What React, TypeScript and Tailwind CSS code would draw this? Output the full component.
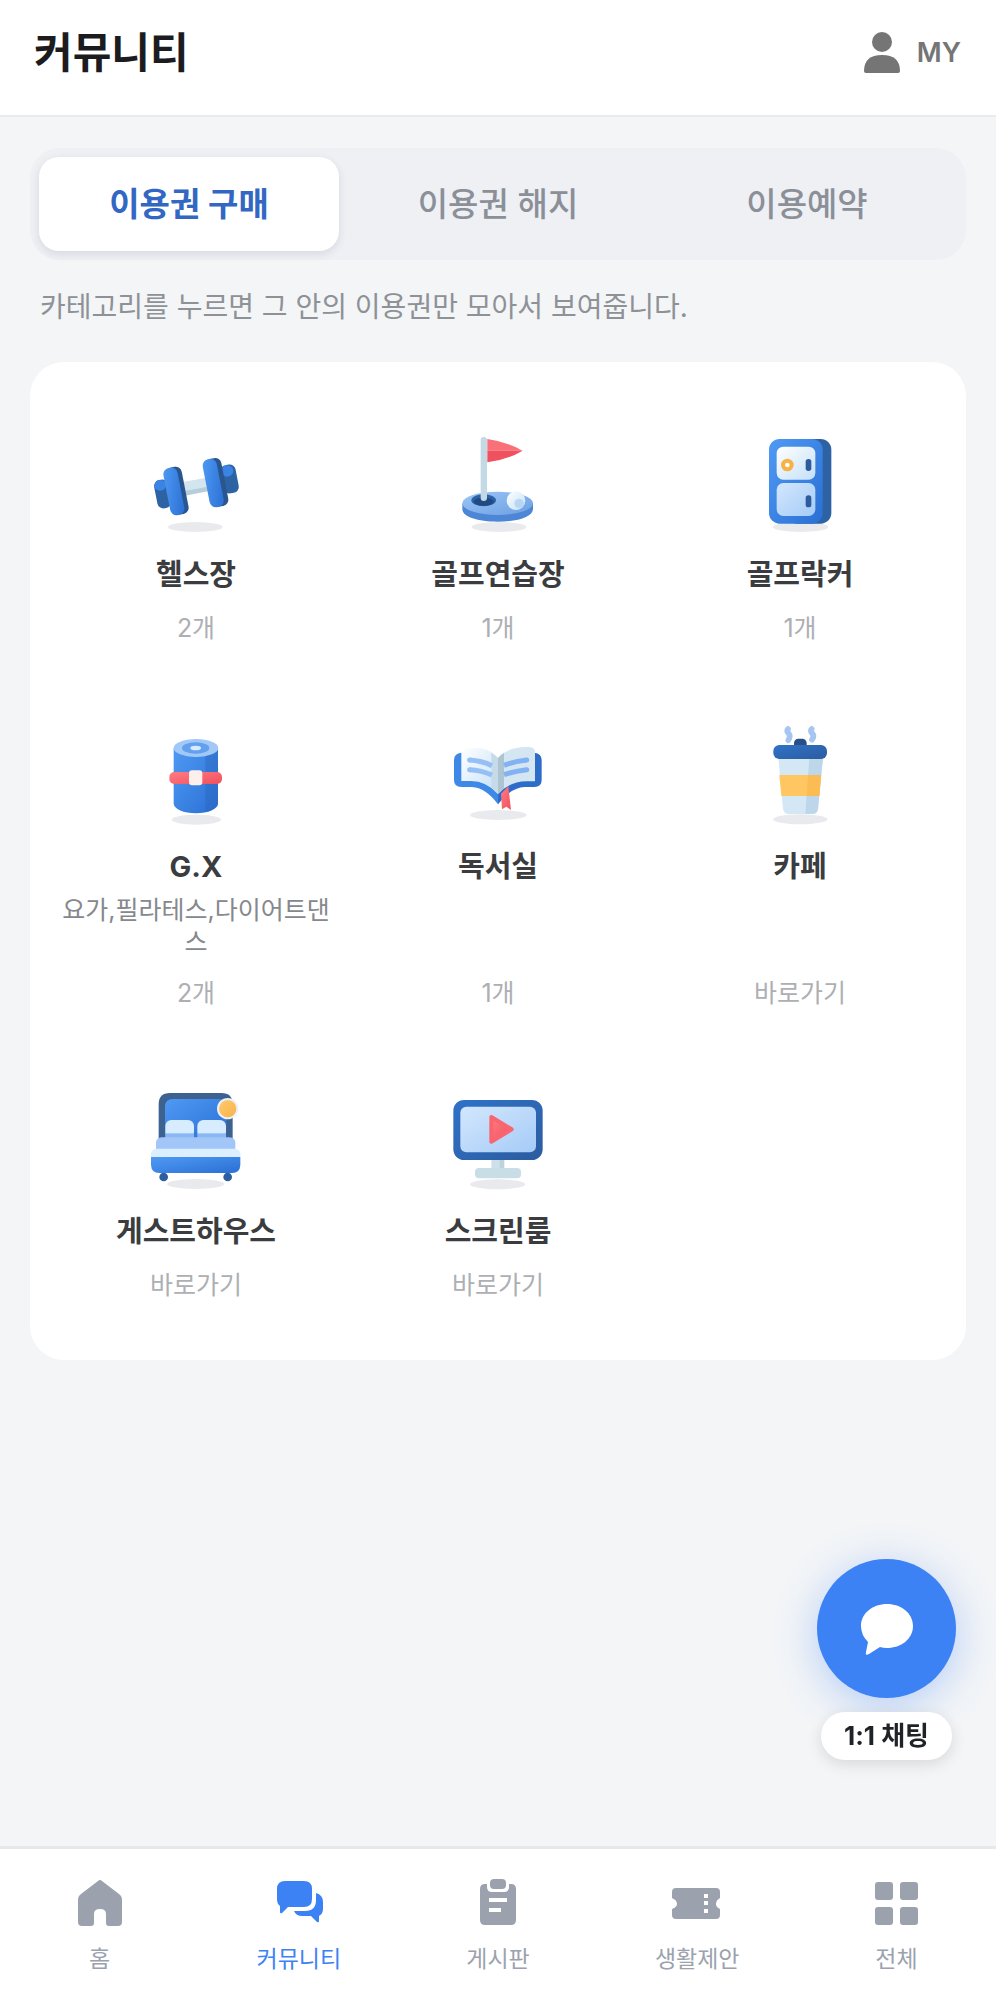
import React, { useState } from "react";
import clsx from "clsx";

const Shadow = ({ cx, cy, rx }: { cx: number; cy: number; rx: number }) => (
  <ellipse cx={cx} cy={cy} rx={rx} ry={15} fill="#e9eaed" />
);

// shared gradients, referenced by every category icon
const Gradients = () => (
  <svg className="absolute w-0 h-0" aria-hidden="true">
    <defs>
      <linearGradient id="blue" x1="0" y1="0" x2="1" y2="1">
        <stop offset="0" stopColor="#4f9af4" />
        <stop offset="1" stopColor="#2a6fd4" />
      </linearGradient>
      <linearGradient id="navy" x1="0" y1="0" x2="1" y2="1">
        <stop offset="0" stopColor="#2f72c9" />
        <stop offset="1" stopColor="#2c5c9f" />
      </linearGradient>
      <linearGradient id="red" x1="0" y1="0" x2="1" y2="1">
        <stop offset="0" stopColor="#ff7c82" />
        <stop offset="1" stopColor="#f0505e" />
      </linearGradient>
      <linearGradient id="sky" x1="0" y1="0" x2="1" y2="1">
        <stop offset="0" stopColor="#d3e7fd" />
        <stop offset="1" stopColor="#a5cbf7" />
      </linearGradient>
      <linearGradient id="ice" x1="0" y1="0" x2="1" y2="1">
        <stop offset="0" stopColor="#ffffff" />
        <stop offset="1" stopColor="#c3e0f8" />
      </linearGradient>
      <linearGradient id="orange" x1="0" y1="0" x2="1" y2="1">
        <stop offset="0" stopColor="#ffcc70" />
        <stop offset="1" stopColor="#f8b145" />
      </linearGradient>
      <linearGradient id="green" x1="0" y1="0" x2="1" y2="1">
        <stop offset="0" stopColor="#9cc6f6" />
        <stop offset="1" stopColor="#6c9fe2" />
      </linearGradient>
    </defs>
  </svg>
);

const GymIcon = () => (
  <svg viewBox="12 0 312 312" className="w-[104px] h-[104px]" aria-hidden="true">
    <Shadow cx={166} cy={291} rx={82} />
    <path d="M128 156 L200 143 L204 182 L134 196 Z" fill="#d3e5ee" />
    <path d="M131 184 L203 170 L204 184 L134 197 Z" fill="#b6cedc" />
    <g transform="rotate(-11 68 192)">
      <rect x="47" y="149" width="42" height="86" rx="18" fill="#2d63a3" />
      <ellipse cx="66" cy="165" rx="18" ry="16" fill="#3b84e6" />
    </g>
    <g transform="rotate(-11 108 183)">
      <rect x="88" y="111" width="48" height="144" rx="19" fill="#29568f" />
      <rect x="80" y="111" width="43" height="144" rx="19" fill="url(#blue)" />
    </g>
    <g transform="rotate(-11 268 148)">
      <rect x="246" y="104" width="46" height="86" rx="18" fill="#2d63a3" />
      <ellipse cx="267" cy="122" rx="18" ry="17" fill="#3b84e6" />
    </g>
    <g transform="rotate(-11 226 158)">
      <rect x="206" y="85" width="49" height="146" rx="19" fill="#29568f" />
      <rect x="198" y="85" width="43" height="146" rx="19" fill="url(#blue)" />
    </g>
  </svg>
);

const GolfIcon = () => (
  <svg viewBox="18 15 312 312" className="w-[104px] h-[104px]" aria-hidden="true">
    <Shadow cx={177} cy={306} rx={82} />
    <path d="M67 236 V252 C67 276 114 290 173 290 C232 290 279 276 279 252 V236 Z" fill="#4d86d6" />
    <ellipse cx="173" cy="235" rx="106" ry="35" fill="url(#green)" />
    <ellipse cx="131" cy="226" rx="37" ry="18" fill="#2c62a8" />
    <ellipse cx="131" cy="230" rx="30" ry="12" fill="#214a80" />
    <path d="M122 44 Q122 36 131 36 Q141 36 141 44 V219 Q141 228 131 228 Q122 228 122 219 Z" fill="#c3d9e5" />
    <path d="M142 42 Q200 50 248 77 L142 77 Z" fill="#fa7078" />
    <path d="M248 77 Q200 105 142 112 V77 Z" fill="#ef515e" />
    <circle cx="228" cy="227" r="28" fill="url(#ice)" />
    <circle cx="237" cy="235" r="14" fill="#a9cdf0" opacity="0.7" />
  </svg>
);

const LockerIcon = () => (
  <svg viewBox="24 15 312 312" className="w-[104px] h-[104px]" aria-hidden="true">
    <Shadow cx={182} cy={306} rx={83} />
    <rect x="140" y="42" width="134" height="254" rx="32" fill="#2d62a4" />
    <rect x="87" y="42" width="161" height="254" rx="32" fill="url(#blue)" />
    <rect x="110" y="65" width="116" height="99" rx="20" fill="url(#ice)" />
    <rect x="110" y="174" width="116" height="99" rx="20" fill="url(#sky)" />
    <circle cx="142" cy="120" r="13" fill="#fff" stroke="#f8b145" strokeWidth="12" />
    <rect x="197" y="102" width="17" height="36" rx="8" fill="#2d5c9c" />
    <rect x="197" y="211" width="17" height="36" rx="8" fill="#2d5c9c" />
  </svg>
);

const MatIcon = () => (
  <svg viewBox="12 6 312 312" className="w-[104px] h-[104px]" aria-hidden="true">
    <Shadow cx={169} cy={299} rx={74} />
    <path d="M101 84 H234 V250 C234 268 204 280 168 280 C131 280 101 268 101 250 Z" fill="url(#blue)" />
    <path d="M196 84 H234 V250 C234 262 220 270 196 276 Z" fill="#2b63b8" opacity="0.4" />
    <ellipse cx="168" cy="84" rx="67" ry="27" fill="#a2c8f8" />
    <ellipse cx="167" cy="84" rx="41" ry="17" fill="#63a0ee" />
    <ellipse cx="167" cy="84" rx="16" ry="7" fill="#d9ebff" />
    <rect x="88" y="156" width="158" height="36" rx="15" fill="url(#red)" />
    <rect x="147" y="151" width="40" height="45" rx="9" fill="#fdf0ec" />
  </svg>
);

const BookIcon = () => (
  <svg viewBox="18 6 312 312" className="w-[104px] h-[104px]" aria-hidden="true">
    <Shadow cx={175} cy={285} rx={85} />
    <path d="M42 120 Q42 100 64 98 L174 150 V253 Q137 203 96 201 H64 Q42 201 42 180 Z" fill="#3e88e8" />
    <path d="M305 120 Q305 100 283 98 L174 150 V253 Q211 203 254 201 H283 Q305 201 305 180 Z" fill="#2d6cc9" />
    <path d="M64 98 Q66 84 93 84 Q146 80 174 114 V222 Q138 182 90 183 H64 Z" fill="url(#ice)" />
    <path d="M285 95 Q284 81 264 81 Q206 79 174 114 V222 Q207 185 260 184 H285 Z" fill="#d3e6f1" />
    <path d="M154 98 Q166 104 174 114 V222 L154 203 Z" fill="#c6dbe7" />
    <path d="M192 98 Q182 104 174 114 V222 L192 204 Z" fill="#adc5d3" />
    <g fill="none" strokeWidth="15">
      <path d="M89 120 Q125 122 156 137 M89 149 Q125 151 156 165" stroke="#96bff5" />
      <path d="M89 120 h.1 M89 149 h.1" stroke="#96bff5" strokeLinecap="round" />
      <path d="M192 136 Q224 124 260 120 M192 164 Q224 153 260 149" stroke="#83b2f3" />
      <path d="M260 120 h.1 M260 149 h.1" stroke="#83b2f3" strokeLinecap="round" />
    </g>
    <path d="M183 221 L205 199 L213 270 L199 260 L186 268 Z" fill="url(#red)" />
  </svg>
);

const CafeIcon = () => (
  <svg viewBox="24 21 312 312" className="w-[104px] h-[104px]" aria-hidden="true">
    <Shadow cx={181} cy={313} rx={82} />
    <g fill="none" stroke="#a6c6f2" strokeWidth="17" strokeLinecap="round">
      <path d="M144 42 Q138 48 146 55 Q153 63 145 76" />
      <path d="M215 42 Q209 48 217 55 Q224 63 216 74" />
    </g>
    <rect x="162" y="71" width="38" height="30" rx="13" fill="#284f87" />
    <path d="M115 128 H249 L234 282 Q232 297 216 297 H146 Q132 297 129 282 Z" fill="#d4e7f5" />
    <path d="M208 128 H249 L234 282 Q232 297 216 297 H196 Z" fill="#bed6ea" />
    <path d="M118 180 H243 L238 243 H124 Z" fill="#ffc661" />
    <path d="M204 180 H243 L238 243 H200 Z" fill="#fbbc53" />
    <rect x="100" y="90" width="161" height="42" rx="18" fill="url(#navy)" />
  </svg>
);

const BedIcon = () => (
  <svg viewBox="12 18 312 312" className="w-[104px] h-[104px]" aria-hidden="true">
    <Shadow cx={167} cy={309} rx={86} />
    <path d="M56 180 V70 Q56 36 90 36 H244 Q278 36 278 70 V180 Z" fill="#3d628f" />
    <path d="M75 180 V78 Q75 54 99 54 H235 Q259 54 259 78 V180 Z" fill="url(#blue)" />
    <rect x="76" y="117" width="86" height="54" rx="18" fill="#d8ecff" />
    <path d="M76 157 H162 V171 H76 Z" fill="#89b8f3" />
    <rect x="172" y="117" width="86" height="54" rx="18" fill="#d8ecff" />
    <path d="M172 157 H258 V171 H172 Z" fill="#89b8f3" />
    <circle cx="71" cy="288" r="13" fill="#2d5e9f" />
    <circle cx="263" cy="288" r="13" fill="#2d5e9f" />
    <path d="M48 206 V184 Q50 169 68 169 H266 Q284 169 286 184 V206 Z" fill="#a1c6f7" />
    <path d="M33 228 V218 Q34 203 52 203 H284 Q300 204 301 218 V228 Z" fill="#dcefff" />
    <path d="M33 228 H301 V252 Q300 276 276 276 H58 Q34 276 33 252 Z" fill="url(#blue)" />
    <circle cx="263" cy="83" r="29" fill="url(#orange)" stroke="#eaf0f6" strokeWidth="6" />
  </svg>
);

const ScreenIcon = () => (
  <svg viewBox="18 18 312 312" className="w-[104px] h-[104px]" aria-hidden="true">
    <Shadow cx={173} cy={310} rx={83} />
    <rect x="155" y="228" width="38" height="40" fill="#bcd3de" />
    <rect x="155" y="228" width="24" height="40" fill="#cde0e9" />
    <rect x="105" y="261" width="138" height="31" rx="12" fill="#c9dde6" />
    <rect x="40" y="57" width="268" height="180" rx="32" fill="url(#navy)" />
    <rect x="61" y="77" width="227" height="137" rx="18" fill="url(#sky)" />
    <path d="M154 108 L215 145 L154 182 Z" fill="url(#red)" stroke="#f9656f" strokeWidth="12" strokeLinejoin="round" />
  </svg>
);

const tabs = ["이용권 구매", "이용권 해지", "이용예약"];

const categories = [
  { name: "헬스장", count: "2개", Icon: GymIcon },
  { name: "골프연습장", count: "1개", Icon: GolfIcon },
  { name: "골프락커", count: "1개", Icon: LockerIcon },
  { name: "G.X", desc: "요가,필라테스,다이어트댄스", count: "2개", Icon: MatIcon },
  { name: "독서실", count: "1개", Icon: BookIcon },
  { name: "카페", count: "바로가기", Icon: CafeIcon },
  { name: "게스트하우스", count: "바로가기", Icon: BedIcon },
  { name: "스크린룸", count: "바로가기", Icon: ScreenIcon },
];

const navItems = [
  {
    label: "홈",
    icon: (
      <path d="M26 7 Q28 5 30 7 L47 20 Q50 22 50 26 V48 Q50 52 46 52 H37 Q34 52 34 49 V40 Q34 35 28 35 Q22 35 22 40 V49 Q22 52 19 52 H10 Q6 52 6 48 V26 Q6 22 9 20 Z" />
    ),
  },
  {
    label: "커뮤니티",
    active: true,
    icon: (
      <>
        <path d="M14 7 H33 Q41 7 41 15 V25 Q41 33 33 33 H17 L11 39 Q9 40 9 38 V32 Q6 30 6 25 V15 Q6 7 14 7 Z" />
        <path d="M45 19 Q52 21 52 28 V35 Q52 40 48 42 V47 Q48 49 46 48 L40 42 H31 Q25 42 23 37 H34 Q45 37 45 26 Z" />
      </>
    ),
  },
  {
    label: "게시판",
    icon: (
      <>
        <path
          fillRule="evenodd"
          d="M15 10 H17 V13 Q17 18 22 18 H34 Q39 18 39 13 V10 H41 Q46 10 46 15 V46 Q46 51 41 51 H15 Q10 51 10 46 V15 Q10 10 15 10 Z M19 24 V28 H37 V24 Z M19 34 V38 H31 V34 Z"
        />
        <rect x="20" y="5" width="16" height="10" rx="4" />
      </>
    ),
  },
  {
    label: "생활제안",
    icon: (
      <path
        fillRule="evenodd"
        d="M7 14 H47 Q51 14 51 18 V24 Q47 26 47 30 Q47 33 51 35 V41 Q51 45 47 45 H7 Q3 45 3 41 V35 Q8 33 8 30 Q8 26 3 24 V18 Q3 14 7 14 Z M35 20 V24 H39 V20 Z M35 27 V31 H39 V27 Z M35 35 V39 H39 V35 Z"
      />
    ),
  },
  {
    label: "전체",
    icon: (
      <>
        <rect x="7" y="8" width="18" height="18" rx="3" />
        <rect x="32" y="8" width="18" height="18" rx="3" />
        <rect x="7" y="33" width="18" height="18" rx="3" />
        <rect x="32" y="33" width="18" height="18" rx="3" />
      </>
    ),
  },
];

const App = () => {
  const [selected, setSelected] = useState(0);

  return (
    <div className="min-h-screen flex flex-col bg-[#f3f5f7] font-[Inter,'Noto_Sans_CJK_KR',sans-serif]">
      <Gradients />
      <header className="flex items-center justify-between bg-white border-b-2 border-[#e9ebee] pt-[25px] pb-[34px] pl-[34px] pr-[35px]">
        <h1 className="text-[42px] leading-[56px] font-bold text-[#1c1c1e]">커뮤니티</h1>
        <button type="button" className="flex items-center gap-4 text-[#757575]">
          <svg viewBox="0 0 38 42" className="w-[38px] h-[42px]" fill="currentColor" aria-hidden="true">
            <circle cx="19" cy="10" r="10" />
            <path d="M1 39 Q1 23 19 23 Q37 23 37 39 Q37 41 35 41 H3 Q1 41 1 39 Z" />
          </svg>
          <span className="text-[27px] leading-9 font-semibold">MY</span>
        </button>
      </header>

      <main className="flex-1 px-[30px] pt-[31px] pb-10">
        <div role="tablist" className="grid grid-cols-3 gap-[9px] p-[9px] rounded-[30px] bg-[#eef0f4]">
          {tabs.map((tab, i) => (
            <button
              key={tab}
              type="button"
              role="tab"
              aria-selected={selected === i}
              onClick={() => setSelected(i)}
              className={clsx(
                "h-[94px] rounded-[20px] text-[33px] leading-10",
                selected === i
                  ? "bg-white text-[#3267c4] font-bold shadow-[0_3px_8px_rgba(30,50,80,0.12)]"
                  : "text-[#8b8f98] font-medium"
              )}
            >
              {tab}
            </button>
          ))}
        </div>

        <p className="px-[10px] mt-[25px] text-[28px] leading-[44px] text-[#8e9196]">
          카테고리를 누르면 그 안의 이용권만 모아서 보여줍니다.
        </p>

        <section className="mt-[33px] grid grid-cols-3 rounded-[34px] bg-white px-[15px] pt-6 pb-[25px]">
          {categories.map(({ name, desc, count, Icon }) => (
            <button key={name} type="button" className="flex flex-col items-center pt-11 pb-[34px] px-2">
              <Icon />
              <span className="mt-[23px] text-[29px] leading-9 font-bold text-[#3a3c40]">{name}</span>
              {desc && (
                <span className="mt-[9px] text-[25px] leading-8 break-all text-[#85888d]">{desc}</span>
              )}
              <span className="mt-auto pt-[19px] text-[25px] leading-8 text-[#adafb3]">{count}</span>
            </button>
          ))}
        </section>
      </main>

      <button type="button" className="fixed right-10 bottom-60 flex flex-col items-center gap-[14px]">
        <span className="flex items-center justify-center w-[139px] h-[139px] rounded-full bg-[#3d82f5] shadow-[0_8px_40px_rgba(61,130,245,0.35)]">
          <svg viewBox="0 0 54 54" className="w-[54px] h-[54px]" fill="#fff" aria-hidden="true">
            <path d="M27 2 C41 2 53 11 53 24 C53 37 41 46 27 46 Q23 46 20 45 L9 52 Q5 54 6 50 L8 40 Q1 33 1 24 C1 11 13 2 27 2 Z" />
          </svg>
        </span>
        <span className="px-[23px] rounded-full bg-white text-[26px] leading-[48px] font-bold text-[#1f2328] shadow-[0_4px_16px_rgba(0,0,0,0.12)]">
          1:1 채팅
        </span>
      </button>

      <nav className="sticky bottom-0 grid grid-cols-5 bg-white border-t-[3px] border-[#e6e8ea] pt-[25px] pb-[27px]">
        {navItems.map(({ label, icon, active }) => (
          <a
            key={label}
            href="#"
            aria-current={active ? "page" : undefined}
            className={clsx("flex flex-col items-center gap-[15px]", active ? "text-[#3d82f5]" : "text-[#9ba2ae]")}
          >
            <svg viewBox="0 0 56 56" className="w-14 h-14" fill="currentColor" aria-hidden="true">
              {icon}
            </svg>
            <span className="text-[23px] leading-7">{label}</span>
          </a>
        ))}
      </nav>
    </div>
  );
};

export default App;
